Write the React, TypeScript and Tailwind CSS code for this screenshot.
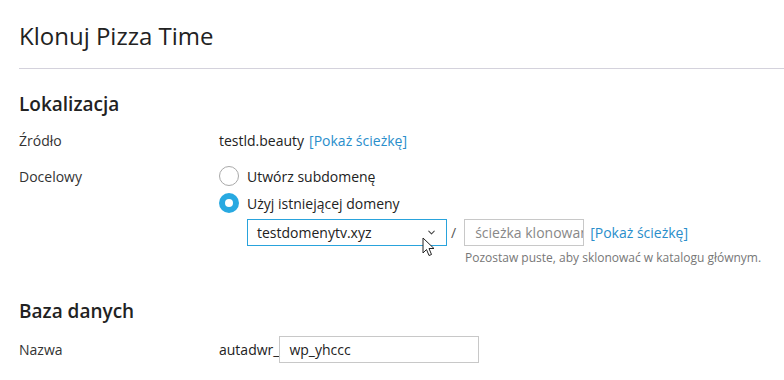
import { ChevronDown } from "lucide-react";

const font = { fontFamily: '"Open Sans", "Liberation Sans", sans-serif' };

function Radio({ checked }: { checked?: boolean }) {
  if (checked) {
    return (
      <span className="flex h-5 w-5 shrink-0 items-center justify-center rounded-full bg-[#28a9e1]">
        <span className="h-2 w-2 rounded-full bg-white" />
      </span>
    );
  }
  return <span className="h-5 w-5 shrink-0 rounded-full border border-[#a9a9a9] bg-white" />;
}

function Cursor() {
  return (
    <svg className="pointer-events-none absolute left-[175px] top-[18px]" width="14" height="21" viewBox="0 0 14 21">
      <path d="M1 1 L1 16 L4.5 12.5 L7 18.5 L9.5 17.5 L7 11.5 L12 11.5 Z" fill="white" stroke="#222" strokeWidth="1" strokeLinejoin="round" />
    </svg>
  );
}

export default function App() {
  return (
    <div className="h-[380px] w-[784px] overflow-hidden bg-white pl-[19px] text-[14px] text-[#333]" style={font}>
      <div className="border-b border-[#d4d2dc] pb-[18px] pt-[22px]">
        <h1 className="text-[24px] leading-[28px] text-[#222]">Klonuj Pizza Time</h1>
      </div>

      <h2 className="mt-[22px] text-[19px] font-semibold leading-[26px] text-[#222]">Lokalizacja</h2>

      <div className="mt-[13px] flex h-5 items-center">
        <div className="w-[200px]">Źródło</div>
        <div className="flex items-center gap-[5px] text-[#222]">
          testld.beauty
          <a className="text-[#2a8ecb]">[Pokaż ścieżkę]</a>
        </div>
      </div>

      <div className="mt-[16px] flex">
        <div className="w-[200px] pt-[1px] leading-5">Docelowy</div>
        <div className="flex flex-col">
          <label className="flex h-5 items-center gap-[8px] text-[#222]">
            <Radio />
            Utwórz subdomenę
          </label>
          <label className="mt-[7px] flex h-5 items-center gap-[8px] text-[#222]">
            <Radio checked />
            Użyj istniejącej domeny
          </label>
          <div className="relative ml-[28px] mt-[6px] flex items-center">
            <div className="flex h-[27px] w-[200px] items-center justify-between border border-[#29a3dc] pl-[9px] pr-[9px] text-[#222]">
              testdomenytv.xyz
              <ChevronDown size={11} strokeWidth={2.2} className="text-[#444]" />
            </div>
            <Cursor />
            <span className="ml-[4px] mr-[8px] text-[#555]">/</span>
            <input
              className="h-[27px] w-[120px] border border-[#c8c8c8] pl-[10px] text-[14px] outline-none placeholder:text-[#888]"
              placeholder="ścieżka klonowania"
            />
            <a className="ml-[6px] text-[#2a8ecb]">[Pokaż ścieżkę]</a>
          </div>
          <div className="ml-[246px] mt-[4px] text-[12px] leading-4 text-[#777]">
            Pozostaw puste, aby sklonować w katalogu głównym.
          </div>
        </div>
      </div>

      <h2 className="mt-[32px] text-[19px] font-semibold leading-[26px] text-[#222]">Baza danych</h2>

      <div className="mt-[12px] flex items-center">
        <div className="w-[200px]">Nazwa</div>
        <div className="flex items-center text-[#222]">
          autadwr_
          <input
            className="h-[27px] w-[200px] border border-[#c8c8c8] pl-[9px] text-[14px] text-[#222] outline-none"
            defaultValue="wp_yhccc"
          />
        </div>
      </div>
    </div>
  );
}
